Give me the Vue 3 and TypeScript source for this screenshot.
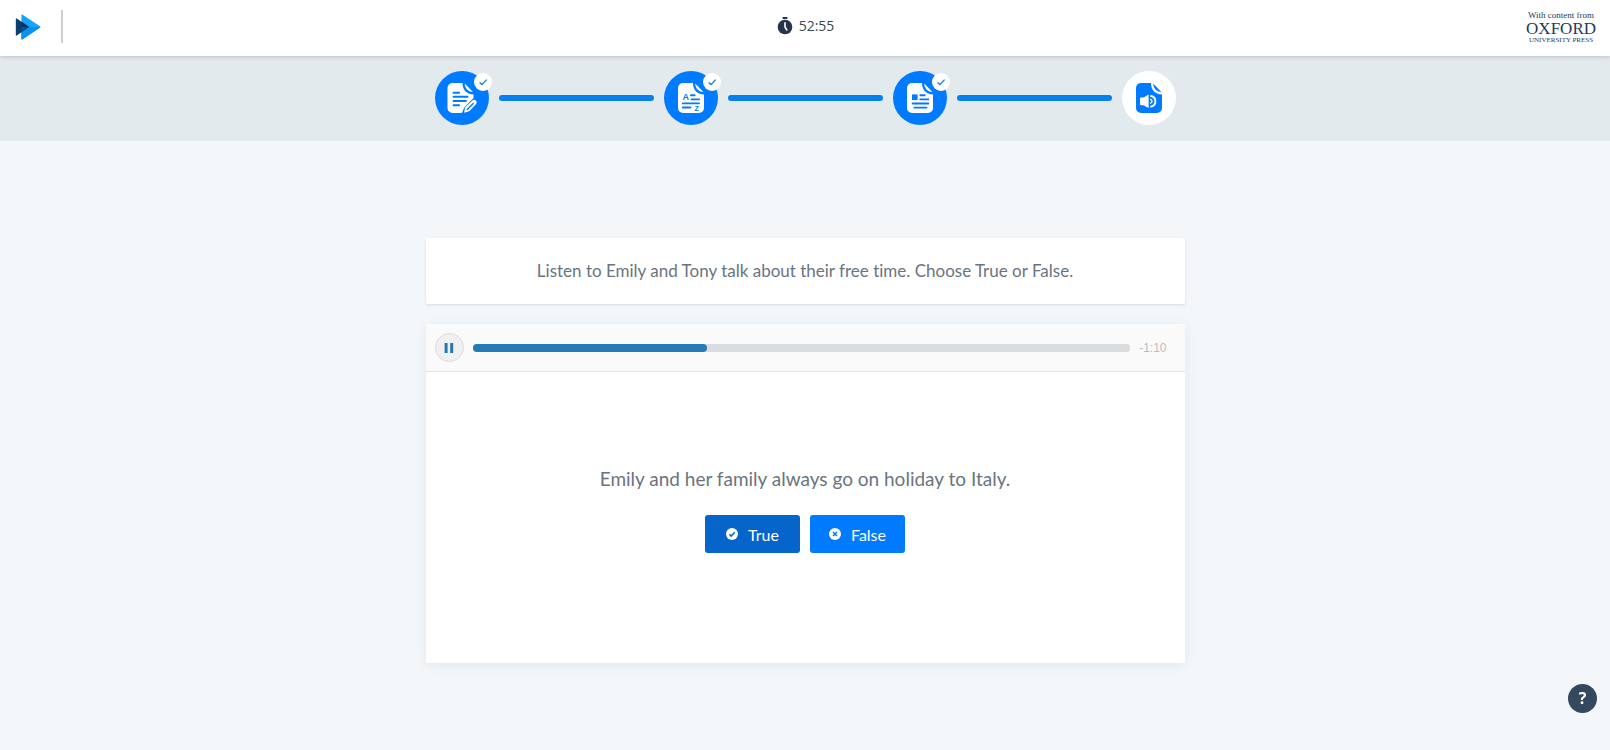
<script setup lang="ts">
import { computed, ref } from 'vue'

type StepKind = 'writing' | 'vocabulary' | 'reading' | 'listening'

interface Step {
  kind: StepKind
  label: string
  done: boolean
}

const steps: Step[] = [
  { kind: 'writing', label: 'Writing', done: true },
  { kind: 'vocabulary', label: 'Vocabulary', done: true },
  { kind: 'reading', label: 'Reading', done: true },
  { kind: 'listening', label: 'Listening', done: false },
]

const duration = 1090
const position = ref(388)
const playing = ref(true)
const answer = ref<boolean | null>(true)

const playedWidth = computed(() => `${(position.value / duration) * 100}%`)
</script>

<template>
  <div class="page">
    <header class="topbar">
      <div class="brand">
        <svg class="logo" width="26" height="26" viewBox="0 0 26 26" aria-hidden="true">
          <path d="M6.4 1.4Q6.4 0 7.6.8L25 12.2Q26 13 25 13.8L7.6 25.2Q6.4 26 6.4 24.6Z" fill="#14a5fb" />
          <path d="M6.4 13H25.6L7.6 25.2Q6.4 26 6.4 24.6Z" fill="#0793ee" />
          <path d="M.8 5Q.8 4 1.8 4.6L14 13 1.8 21.4Q.8 22 .8 21Z" fill="#0b3d6e" />
          <path d="M6.4 7.8 14 13 6.4 18.2Z" fill="#08509a" />
          <path d="M6.4 7.8 14 13H6.4Z" fill="#0a2f5c" />
        </svg>
        <span class="divider"></span>
      </div>
      <div class="timer">
        <svg width="16" height="18" viewBox="0 0 16 18" aria-hidden="true">
          <rect x="5.6" y="0" width="4.8" height="2" rx=".4" fill="#25344a" />
          <circle cx="8" cy="10" r="7.3" fill="#25344a" />
          <path d="M8 5.8V10l1.8 3" fill="none" stroke="#fff" stroke-width="1.6" stroke-linecap="round" />
        </svg>
        <time>52:55</time>
      </div>
      <div class="publisher">
        <span class="with">With content from</span>
        <span class="oxford">OXFORD</span>
        <span class="press">UNIVERSITY PRESS</span>
      </div>
    </header>

    <nav class="steps-bar" aria-label="Test sections">
      <div class="steps">
        <template v-for="(step, i) in steps" :key="step.kind">
          <span v-if="i > 0" class="connector"></span>
          <div class="step" :class="{ current: !step.done }" role="img" :aria-label="step.label">
            <svg width="54" height="54" viewBox="0 0 54 54" aria-hidden="true">
              <g v-if="step.kind === 'writing'">
                <g transform="translate(-1.5 0)">
                  <path class="ink" d="M19 12H29C29 19 33 23 40 23.5V27L30 38 28.5 42H19a5 5 0 0 1-5-5V17a5 5 0 0 1 5-5Z" />
                  <path class="ink" d="M31.2 12.6 39.6 21.2C34.5 20.6 31.3 17.6 31.2 12.6Z" />
                </g>
                <path class="cut" d="M18.5 21.7h5.6M18.5 25.8h14M18.5 30h12.5M18.5 34.2h5.6" />
                <path class="ink halo" d="M29 41.8 30.2 36.6 37.6 29.2Q39.2 28 40.8 29.6 42.6 31.4 41.2 33L34.2 40.2Z" />
                <path class="cut thin" d="M32.2 38.4 38.2 32.4" />
              </g>
              <g v-else>
                <path class="ink" d="M19 12H29C29 19 33 23 40 23.5V37a5 5 0 0 1-5 5H19a5 5 0 0 1-5-5V17a5 5 0 0 1 5-5Z" />
                <path class="ink" d="M31.2 12.6 39.6 21.2C34.5 20.6 31.3 17.6 31.2 12.6Z" />
                <g v-if="step.kind === 'vocabulary'">
                  <text class="glyph" x="18.5" y="29" font-size="9">A</text>
                  <text class="glyph" x="30.4" y="40" font-size="7">Z</text>
                  <path class="cut" d="M27 24.2h3.6M27.6 28.4h7.4M18.8 32.4H35M18.8 36.5h7.6" />
                </g>
                <g v-else-if="step.kind === 'reading'">
                  <rect class="cut-fill" x="19" y="23.4" width="5.6" height="5.6" />
                  <path class="cut" d="M27.3 24.2h4.4M27.3 28.4h8M19.6 32.5h15.7M21.4 36.6h12.2" />
                </g>
                <g v-else>
                  <path class="cut-fill" d="M19.2 26.4H21.5L26.6 23.6V37L21.5 34.2H19.2Q18 34.2 18 33V27.6Q18 26.4 19.2 26.4Z" />
                  <path class="cut" d="M29 25A5.4 5.4 0 0 1 29 35.6" />
                  <path class="cut thin" d="M28.6 28.4A2 2 0 0 1 28.6 32.2" />
                </g>
              </g>
            </svg>
            <span v-if="step.done" class="badge">
              <svg width="10" height="10" viewBox="0 0 10 10" aria-hidden="true">
                <path d="M1.6 5.4 4 7.6 8.6 2.6" fill="none" stroke="#167bd0" stroke-width="1.3" />
              </svg>
            </span>
          </div>
        </template>
      </div>
    </nav>

    <main class="content">
      <section class="card instruction">
        Listen to Emily and Tony talk about their free time. Choose True or False.
      </section>

      <section class="card exercise">
        <div class="player">
          <button class="pause" type="button" aria-label="Pause" @click="playing = !playing">
            <svg width="10" height="12" viewBox="0 0 10 12" aria-hidden="true">
              <path v-if="playing" d="M.6 1h3v10h-3ZM6.2 1h3v10h-3Z" fill="#2878b0" />
              <path v-else d="M1 1 9.4 6 1 11Z" fill="#2878b0" />
            </svg>
          </button>
          <div class="track">
            <div class="played" :style="{ width: playedWidth }"></div>
            <input v-model.number="position" class="seek" type="range" min="0" :max="duration" aria-label="Seek" />
          </div>
          <span class="remaining">-1:10</span>
        </div>

        <div class="question">
          <p class="statement">Emily and her family always go on holiday to Italy.</p>
          <div class="answers">
            <button class="answer" :class="{ active: answer === true }" type="button" @click="answer = true">
              <svg width="12" height="12" viewBox="0 0 12 12" aria-hidden="true">
                <circle cx="6" cy="6" r="6" fill="#fff" />
                <path d="M3.4 6.2 5.2 8 8.7 4.3" fill="none" stroke="#0565cb" stroke-width="1.6" />
              </svg>
              True
            </button>
            <button class="answer" :class="{ active: answer === false }" type="button" @click="answer = false">
              <svg width="12" height="12" viewBox="0 0 12 12" aria-hidden="true">
                <circle cx="6" cy="6" r="6" fill="#fff" />
                <path d="M4 4l4 4M8 4 4 8" fill="none" stroke="#087bee" stroke-width="1.6" />
              </svg>
              False
            </button>
          </div>
        </div>
      </section>
    </main>

    <button class="help" type="button" aria-label="Help">?</button>
  </div>
</template>

<style>
body {
  margin: 0;
  background: #f3f7fa;
}
</style>

<style scoped>
.page {
  min-height: 100vh;
  box-sizing: border-box;
  background: #f3f7fa;
  color: #6a747f;
  font-family: Lato, "Open Sans", sans-serif;
  font-variant-ligatures: none;
}

button {
  border: 0;
  padding: 0;
  font: inherit;
  cursor: pointer;
}

.topbar {
  position: relative;
  display: grid;
  grid-template-columns: 1fr auto 1fr;
  height: 56px;
  padding: 0 14px 0 15px;
  background: #fff;
  box-shadow: 0 1px 4px rgba(60, 80, 95, 0.25);
}

.brand {
  display: flex;
  align-items: center;
  gap: 20px;
  height: 53px;
}

.divider {
  width: 2px;
  height: 33px;
  background: #cbd0d4;
}

.timer {
  display: flex;
  align-items: center;
  gap: 6px;
  height: 52px;
  color: #3d4853;
  font-family: "Open Sans", sans-serif;
  font-size: 14px;
  line-height: 18px;
}

.publisher {
  display: flex;
  flex-direction: column;
  justify-self: end;
  align-items: center;
  padding-top: 10px;
  color: #1d3a5f;
  font-family: "Liberation Serif", serif;
}

.with {
  font-size: 9px;
  line-height: 11px;
}

.oxford {
  font-size: 17px;
  line-height: 15px;
}

.press {
  font-size: 7px;
  line-height: 8px;
}

.steps-bar {
  padding: 15px 24px 16px;
  background: #e3eaed;
}

.steps {
  display: flex;
  align-items: center;
  gap: 10px;
  max-width: 741px;
  margin: 0 auto;
}

.connector {
  flex: 1;
  height: 6px;
  border-radius: 3px;
  background: #087fee;
}

.step {
  --ink: #fff;
  --paper: #007bff;
  position: relative;
  width: 54px;
  height: 54px;
  border-radius: 50%;
  background: var(--paper);
}

.step.current {
  --ink: #007bff;
  --paper: #fff;
}

.step > svg {
  display: block;
}

.ink {
  fill: var(--ink);
}

.halo {
  stroke: var(--paper);
  stroke-width: 1.2;
  paint-order: stroke;
}

.cut {
  fill: none;
  stroke: var(--paper);
  stroke-width: 1.9;
  stroke-linecap: round;
}

.cut.thin {
  stroke-width: 1.4;
}

.cut-fill,
.glyph {
  fill: var(--paper);
}

.glyph {
  font-family: "Liberation Sans", sans-serif;
  font-weight: 700;
}

.badge {
  position: absolute;
  top: 2px;
  right: -3px;
  display: flex;
  align-items: center;
  justify-content: center;
  width: 18px;
  height: 18px;
  border-radius: 50%;
  background: #fff;
}

.content {
  display: flex;
  flex-direction: column;
  gap: 20px;
  max-width: 759px;
  margin: 0 auto;
  padding: 97px 24px 86px;
}

.card {
  background: #fff;
}

.instruction {
  padding: 21px 24px;
  border-radius: 2px;
  box-shadow: 0 1px 3px rgba(60, 80, 95, 0.16);
  font-size: 17px;
  line-height: 24px;
  text-align: center;
}

.exercise {
  border-radius: 2px;
  box-shadow: 0 2px 12px rgba(60, 80, 95, 0.09);
}

.player {
  display: flex;
  align-items: center;
  gap: 9px;
  padding: 9px 18px 9px 9px;
  border-bottom: 1px solid #e1e4e6;
  background: #fafafa;
}

.pause {
  display: flex;
  align-items: center;
  justify-content: center;
  box-sizing: border-box;
  width: 29px;
  height: 29px;
  border: 1px solid #dcdcdc;
  border-radius: 50%;
  background: #f0f0f0;
}

.track {
  position: relative;
  flex: 1;
  height: 8px;
  border-radius: 3px;
  background: #dadddf;
}

.played {
  height: 100%;
  border-radius: 4px;
  background: #257bb4;
}

.seek {
  position: absolute;
  inset: 0;
  width: 100%;
  height: 100%;
  margin: 0;
  opacity: 0;
  cursor: pointer;
}

.remaining {
  color: #b9bdc0;
  font-family: "Liberation Sans", sans-serif;
  font-size: 12px;
}

.question {
  display: flex;
  flex-direction: column;
  align-items: center;
  gap: 23px;
  padding: 94px 24px 110px;
}

.statement {
  margin: 0;
  font-size: 19px;
  line-height: 26px;
  text-align: center;
}

.answers {
  display: flex;
  gap: 10px;
}

.answer {
  display: flex;
  align-items: center;
  justify-content: center;
  gap: 10px;
  width: 95px;
  height: 38px;
  border-radius: 3px;
  background: #007bff;
  color: #fff;
  font-size: 16px;
}

.answer.active {
  background: #0565cb;
}

.help {
  position: fixed;
  right: 13px;
  bottom: 37px;
  width: 29px;
  height: 29px;
  border-radius: 50%;
  background: #34495e;
  color: #fff;
  font-family: "Open Sans", sans-serif;
  font-size: 16px;
  font-weight: 700;
  line-height: 29px;
}
</style>
